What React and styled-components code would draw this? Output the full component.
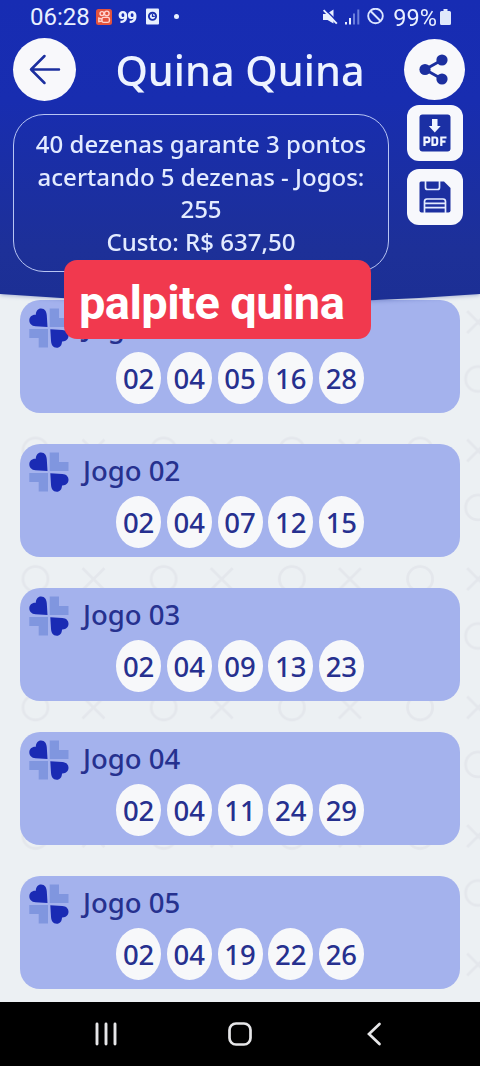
import React from 'react'
import styled, { createGlobalStyle } from 'styled-components'

const games = [
    { title: 'Jogo 01', numbers: ['02', '04', '05', '16', '28'] },
    { title: 'Jogo 02', numbers: ['02', '04', '07', '12', '15'] },
    { title: 'Jogo 03', numbers: ['02', '04', '09', '13', '23'] },
    { title: 'Jogo 04', numbers: ['02', '04', '11', '24', '29'] },
    { title: 'Jogo 05', numbers: ['02', '04', '19', '22', '26'] },
]

function StatusBar() {
    return (
        <Status>
            <Clock>06:28</Clock>
            <AppIcon width="16" height="16" viewBox="0 0 16 16">
                <rect width="16" height="16" rx="2.5" fill="#e4523c" />
                <g fill="none" stroke="#ffd3cd" strokeWidth="1.4">
                    <circle cx="6" cy="4.6" r="2" />
                    <circle cx="10.8" cy="4.4" r="2.3" />
                    <rect x="6" y="8.4" width="7.4" height="5" rx="1.6" />
                    <path d="M6 10 2.8 9.2v3.4L6 12" />
                </g>
            </AppIcon>
            <RideApp>99</RideApp>
            <svg width="13" height="17" viewBox="0 0 13 17">
                <rect y="0.5" width="13" height="16" rx="1" fill="#e9f0ff" />
                <circle cx="6.5" cy="8.3" r="3.6" fill="#e9f0ff" stroke="#1a2fae" strokeWidth="1.9" />
                <path d="M6.5 6v2.4h2.3" fill="none" stroke="#1a2fae" strokeWidth="1.3" />
            </svg>
            <Dot />
            <StatusRight>
                <svg width="16" height="16" viewBox="0 0 16 16">
                    <path d="M1 5h3.5L11.5.5v14L5.5 11H1z" fill="#e9f0ff" />
                    <path d="M2.700 0 16 13.300" stroke="#182db3" strokeWidth="1.500" />
                    <path d="M1.600 1.200 14.800 14.600" stroke="#e9f0ff" strokeWidth="1.900" />
                </svg>
                <svg width="15" height="16" viewBox="0 0 15 16">
                    <rect x="0" y="13" width="2" height="2.5" fill="#e9f0ff" />
                    <rect x="4" y="9" width="2" height="6.5" fill="#e9f0ff" />
                    <rect x="8" y="4.5" width="2" height="11" fill="#6c7fda" />
                    <rect x="12.3" y="0.5" width="2" height="15" fill="#6c7fda" />
                </svg>
                <svg width="17" height="17" viewBox="0 0 17 17">
                    <circle cx="8.5" cy="8" r="7.3" fill="none" stroke="#dbe5ff" strokeWidth="1.9" />
                    <path d="m3.500 3 10 10" stroke="#dbe5ff" strokeWidth="1.900" />
                </svg>
                <Percent>99%</Percent>
                <svg width="11" height="16" viewBox="0 0 11 16">
                    <path d="M3.500 0h4v2H9.500a1.500 1.500 0 0 1 1.500 1.500v11A1.500 1.500 0 0 1 9.500 16h-8A1.500 1.500 0 0 1 0 14.500v-11A1.500 1.500 0 0 1 1.500 2h2z" fill="#dfe8fb" />
                </svg>
            </StatusRight>
        </Status>
    )
}

function BackIcon() {
    return (
        <svg width="32" height="32" viewBox="0 0 32 32" fill="none" stroke="#1c2f9f" strokeWidth="2.500" strokeLinecap="round" strokeLinejoin="round">
            <path d="M30 16.500H2M15.500 3 2 16.500 15.500 30" />
        </svg>
    )
}

function ShareIcon() {
    return (
        <svg width="30" height="31" viewBox="0 0 30 31">
            <path d="M23 6 6 15.500 23 25" fill="none" stroke="#1c2f9f" strokeWidth="2.900" />
            <g fill="#1c2f9f">
                <circle cx="23" cy="6" r="5.600" />
                <circle cx="6" cy="15.500" r="5.600" />
                <circle cx="23" cy="25" r="5.600" />
            </g>
        </svg>
    )
}

function PdfIcon() {
    return (
        <svg width="32" height="38" viewBox="0 0 32 38">
            <rect x="0.500" y="0.500" width="31" height="37" rx="3" fill="#1b30a4" />
            <path d="M13 5h5.500v7h3.200L15.800 18.500l-6-6.500H13z" fill="#f1f5ff" />
            <g fill="none" stroke="#f1f5ff" strokeWidth="2.200">
                <path d="M5.500 32v-8.500h3.300q1.500 0 1.500 1.500v1.600q0 1.500-1.500 1.500H5.500" />
                <path d="M13.500 23.500h2.700q2 0 2 2v3.300q0 2-2 2h-2.700z" />
                <path d="M22.300 32v-8.500h5.200M22.300 27.700h4.200" />
            </g>
        </svg>
    )
}

function SaveIcon() {
    return (
        <svg width="32" height="32" viewBox="0 0 32 32">
            <path d="M2 .5h23L31.500 7v22.500q0 2-2 2H2.500q-2 0-2-2V2Q.5.500 2 .5z" fill="#1c2fa0" />
            <g fill="none" stroke="#e3ebff" strokeWidth="1.700">
                <path d="M6.500 0v6.500q0 2 2 2h10q2 0 2-2V0" />
                <path d="M5.500 32V20.500q0-2.500 2.500-2.500h16q2.500 0 2.500 2.500V32M6 22.300h20M6 26.600h20" />
            </g>
        </svg>
    )
}

function CloverIcon() {
    return (
        <Clover width="40" height="40" viewBox="0 0 40 40">
            <path d="M20.700.5h9.300v9.500h9.500v9H20.700zM.3 21h18.700v18.500H9.700V30H.3z" fill="#8096df" />
            <path d="M18.500 19 6.500 18.300C2.500 18 .3 15.500.3 12.300.3 9 3 6.500 6.800 6.800 6.800 3 9 .4 12 .4c4 0 5.500 3 5.800 7z" fill="#1a2bb4" />
            <path d="m21.300 21.300 12 .7c4 .3 6.200 2.600 6.200 5.800 0 3.400-2.700 5.900-6.500 5.600 0 3.800-2.200 6.300-5.200 6.300-4 0-5.500-3-5.800-7z" fill="#1a2bb4" />
        </Clover>
    )
}

// Faint noughts and crosses repeated behind the list
function Backdrop() {
    return (
        <BackdropSvg>
            <defs>
                <pattern id="xo" x="35.500" y="20" width="128.200" height="128.500" patternUnits="userSpaceOnUse">
                    <g fill="none" stroke="#e4e7ec" strokeWidth="2.800">
                        <circle cx="15" cy="45" r="12.500" />
                        <path d="m62 34 22 22m0-22L62 56" />
                        <circle cx="73" cy="102" r="12.500" />
                        <path d="m4 91 22 22m0-22L4 113" />
                    </g>
                </pattern>
            </defs>
            <g transform="translate(-15 85.500)">
                <rect x="0" y="-100" width="520" height="900" fill="url(#xo)" />
            </g>
        </BackdropSvg>
    )
}

function GameCard(props) {
    return (
        <Card>
            <CardHead>
                <CloverIcon />
                <CardTitle>{props.title}</CardTitle>
            </CardHead>
            <Balls>
                {props.numbers.map((n) => <Ball key={n}>{n}</Ball>)}
            </Balls>
        </Card>
    )
}

export default function App() {
    return (
        <Screen>
            <GlobalStyle />
            <HeaderShadow>
                <Header>
                    <StatusBar />
                    <TitleRow>
                        <RoundButton $size={63} aria-label="Voltar"><BackIcon /></RoundButton>
                        <Title>Quina Quina</Title>
                        <RoundButton $size={61} aria-label="Compartilhar"><ShareIcon /></RoundButton>
                    </TitleRow>
                    <InfoRow>
                        <Info>
                            40 dezenas garante 3 pontos<br />
                            acertando 5 dezenas - Jogos:<br />
                            255<br />
                            Custo: R$ 637,50
                        </Info>
                        <Actions>
                            <SquareButton aria-label="Baixar"><PdfIcon /></SquareButton>
                            <SquareButton aria-label="Salvar"><SaveIcon /></SquareButton>
                        </Actions>
                    </InfoRow>
                </Header>
            </HeaderShadow>
            <List>
                <Backdrop />
                {games.map((g) => <GameCard key={g.title} title={g.title} numbers={g.numbers} />)}
            </List>
            <Caption>palpite quina</Caption>
            <NavBar>
                <svg width="24" height="24" viewBox="0 0 24 24">
                    <path d="M3 2v20M12 2v20M21 2v20" stroke="#e6e6e8" strokeWidth="2.900" strokeLinecap="round" />
                </svg>
                <svg width="26" height="26" viewBox="0 0 26 26">
                    <rect x="2.500" y="2.500" width="21" height="21" rx="6.500" fill="none" stroke="#e6e6e8" strokeWidth="2.700" />
                </svg>
                <svg width="24" height="24" viewBox="0 0 24 24">
                    <path d="M17.500 2 7 12l10.500 10" fill="none" stroke="#e6e6e8" strokeWidth="2.700" strokeLinecap="round" />
                </svg>
            </NavBar>
        </Screen>
    )
}

const GlobalStyle = createGlobalStyle`
body {
    margin: 0;
    font-family: "Noto Sans", "Open Sans", sans-serif;
}
* {
    box-sizing: border-box;
}
svg {
    display: block;
    flex-shrink: 0;
}
`
const Screen = styled.div`
position: relative;
display: flex;
flex-direction: column;
width: 480px;
height: 1066px;
overflow: hidden;
background: #ecf0f3;
`
const HeaderShadow = styled.div`
position: relative;
z-index: 1;
flex-shrink: 0;
filter: drop-shadow(0 1px 2px rgba(60, 80, 160, 0.4));
`
const Header = styled.header`
height: 304px;
background: linear-gradient(#172cb3 0, #182db0 100px, #1d3098 250px, #1c2f94 304px);
clip-path: path("M0 0H480V294Q240 312 0 294Z");
`
const Status = styled.div`
display: flex;
align-items: center;
height: 33px;
padding: 0 29px 0 30px;
color: #e9f0ff;
font-family: Roboto, sans-serif;
`
const Clock = styled.span`
width: 66px;
font-size: 24px;
line-height: 30px;
`
const AppIcon = styled.svg`
margin-right: 6px;
`
const RideApp = styled.span`
width: 28px;
font-size: 17px;
font-weight: 900;
letter-spacing: -0.5px;
`
const Dot = styled.span`
width: 5px;
height: 5px;
margin-left: 15px;
border-radius: 50%;
background: #e9f0ff;
`
const StatusRight = styled.div`
display: flex;
align-items: center;
gap: 7px;
margin-left: auto;
`
const Percent = styled.span`
margin: 3px -4px 0 2px;
font-size: 23.5px;
line-height: 30px;
`
const TitleRow = styled.div`
display: flex;
align-items: center;
justify-content: space-between;
height: 72px;
padding: 0 15px 0 13px;
`
const RoundButton = styled.button`
display: flex;
align-items: center;
justify-content: center;
width: ${(p) => p.$size}px;
height: ${(p) => p.$size}px;
padding: 0;
border: 0;
border-radius: 50%;
background: #f8f8fb;
`
const Title = styled.h1`
margin: 2px 0 0;
color: #edf3ff;
font-size: 41.4px;
font-weight: 500;
line-height: 60px;
white-space: nowrap;
`
const InfoRow = styled.div`
display: flex;
align-items: flex-start;
justify-content: space-between;
padding: 0 17px 0 13px;
`
const Info = styled.div`
width: 376px;
height: 158px;
margin-top: 9px;
padding-top: 13px;
border: 1.5px solid #b8c5f3;
border-radius: 31px;
color: #e3ebff;
font-size: 24px;
font-weight: 500;
line-height: 32.6px;
text-align: center;
white-space: nowrap;
`
const Actions = styled.div`
display: flex;
flex-direction: column;
gap: 8px;
`
const SquareButton = styled.button`
display: flex;
align-items: center;
justify-content: center;
width: 56px;
height: 56px;
padding: 0;
border: 0;
border-radius: 12px;
background: #f7f8fc;
`
const List = styled.main`
position: relative;
display: flex;
flex: 1;
flex-direction: column;
gap: 31px;
min-height: 0;
margin-top: -4px;
padding: 0.4px 20px 0;
`
const BackdropSvg = styled.svg`
position: absolute;
top: 0;
left: 0;
width: 100%;
height: 100%;
`
const Card = styled.section`
position: relative;
flex-shrink: 0;
height: 113px;
padding-top: 8px;
border-radius: 20px;
background: #a4b2ed;
`
const CardHead = styled.div`
display: flex;
align-items: center;
height: 40px;
padding-left: 8.5px;
`
const Clover = styled.svg`
margin-right: 14.5px;
`
const CardTitle = styled.h2`
margin: -2px 0 0;
color: #26318f;
font-size: 27.5px;
font-weight: 500;
line-height: 36px;
`
const Balls = styled.div`
display: flex;
justify-content: center;
gap: 5.7px;
margin-top: 4px;
`
const Ball = styled.span`
display: flex;
align-items: center;
justify-content: center;
width: 45px;
height: 52px;
border-radius: 50%;
background: #f7f8fa;
color: #26308f;
font-size: 27.5px;
font-weight: 500;
`
const Caption = styled.div`
position: absolute;
top: 260px;
left: 64px;
z-index: 2;
width: 307px;
height: 79px;
padding-left: 15px;
border-radius: 13px;
background: #f1394e;
color: #fff;
font-family: Roboto, sans-serif;
font-size: 47px;
font-weight: 700;
letter-spacing: -0.57px;
line-height: 86px;
white-space: nowrap;
`
const NavBar = styled.nav`
position: relative;
display: flex;
flex-shrink: 0;
align-items: center;
justify-content: space-between;
height: 64px;
padding: 0 94px;
background: #000;
`
